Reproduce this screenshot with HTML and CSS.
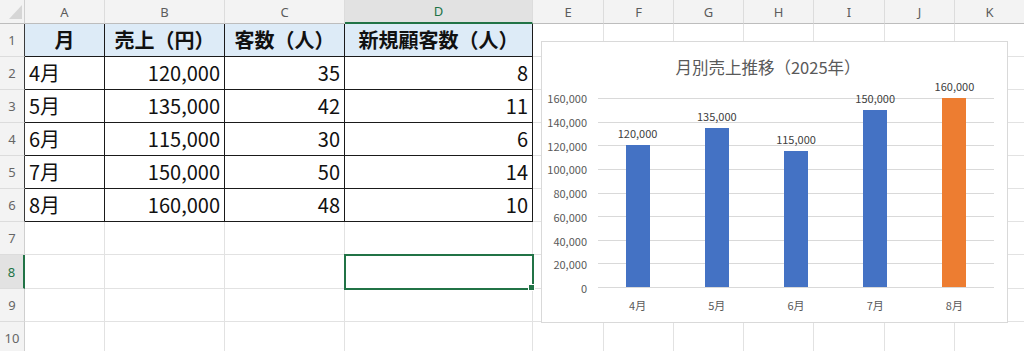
FILE: index.html
```html
<!DOCTYPE html>
<html lang="ja">
<head>
    <meta charset="UTF-8">
    <meta name="viewport" content="width=device-width, initial-scale=1.0">
    <title>月別売上</title>
    <link rel="stylesheet" href="styles.css">
</head>
<body>
    <div class="sheet">
        <table class="grid">
            <colgroup>
                <col class="w-head">
                <col class="w-a">
                <col class="w-b">
                <col class="w-c">
                <col class="w-d">
                <col class="w-e"><col class="w-f"><col class="w-g"><col class="w-h">
                <col class="w-i"><col class="w-j"><col class="w-k">
            </colgroup>
            <thead>
                <tr class="col-heads">
                    <th class="corner">
                        <svg width="25" height="23" viewBox="0 0 25 23"><polygon points="22,5 22,19 9,19" fill="#d6d6d6"/></svg>
                    </th>
                    <th>A</th><th>B</th><th>C</th><th class="sel">D</th>
                    <th>E</th><th>F</th><th>G</th><th>H</th><th>I</th><th>J</th><th>K</th>
                </tr>
            </thead>
            <tbody>
                <tr>
                    <th class="row-head edge">1</th>
                    <td class="box head">月</td>
                    <td class="box head">売上（円）</td>
                    <td class="box head">客数（人）</td>
                    <td class="box head">新規顧客数（人）</td>
                    <td></td><td></td><td></td><td></td><td></td><td></td><td></td>
                </tr>
                <tr>
                    <th class="row-head edge">2</th>
                    <td class="box">4月</td>
                    <td class="box num">120,000</td>
                    <td class="box num">35</td>
                    <td class="box num">8</td>
                    <td></td><td></td><td></td><td></td><td></td><td></td><td></td>
                </tr>
                <tr>
                    <th class="row-head edge">3</th>
                    <td class="box">5月</td>
                    <td class="box num">135,000</td>
                    <td class="box num">42</td>
                    <td class="box num">11</td>
                    <td></td><td></td><td></td><td></td><td></td><td></td><td></td>
                </tr>
                <tr>
                    <th class="row-head edge">4</th>
                    <td class="box">6月</td>
                    <td class="box num">115,000</td>
                    <td class="box num">30</td>
                    <td class="box num">6</td>
                    <td></td><td></td><td></td><td></td><td></td><td></td><td></td>
                </tr>
                <tr>
                    <th class="row-head edge">5</th>
                    <td class="box">7月</td>
                    <td class="box num">150,000</td>
                    <td class="box num">50</td>
                    <td class="box num">14</td>
                    <td></td><td></td><td></td><td></td><td></td><td></td><td></td>
                </tr>
                <tr>
                    <th class="row-head edge">6</th>
                    <td class="box">8月</td>
                    <td class="box num">160,000</td>
                    <td class="box num">48</td>
                    <td class="box num">10</td>
                    <td></td><td></td><td></td><td></td><td></td><td></td><td></td>
                </tr>
                <tr>
                    <th class="row-head">7</th>
                    <td></td><td></td><td></td><td></td>
                    <td></td><td></td><td></td><td></td><td></td><td></td><td></td>
                </tr>
                <tr class="tall">
                    <th class="row-head sel">8</th>
                    <td></td><td></td><td></td><td class="active"></td>
                    <td></td><td></td><td></td><td></td><td></td><td></td><td></td>
                </tr>
                <tr>
                    <th class="row-head">9</th>
                    <td></td><td></td><td></td><td></td>
                    <td></td><td></td><td></td><td></td><td></td><td></td><td></td>
                </tr>
                <tr>
                    <th class="row-head">10</th>
                    <td></td><td></td><td></td><td></td>
                    <td></td><td></td><td></td><td></td><td></td><td></td><td></td>
                </tr>
            </tbody>
        </table>

        <!-- グラフ（シート上に浮いているオブジェクト） -->
        <div class="chart">
            <div class="chart-title">月別売上推移（2025年）</div>
            <div class="chart-body">
                <div class="y-axis">
                    <span>160,000</span><span>140,000</span><span>120,000</span>
                    <span>100,000</span><span>80,000</span><span>60,000</span>
                    <span>40,000</span><span>20,000</span><span>0</span>
                </div>
                <div class="plot">
                    <div class="gridlines">
                        <i></i><i></i><i></i><i></i><i></i><i></i><i></i><i></i><i></i>
                    </div>
                    <div class="bars">
                        <div class="bar-col"><span class="value">120,000</span><div class="bar" style="height:142px"></div></div>
                        <div class="bar-col"><span class="value">135,000</span><div class="bar" style="height:159px"></div></div>
                        <div class="bar-col"><span class="value">115,000</span><div class="bar" style="height:136px"></div></div>
                        <div class="bar-col"><span class="value">150,000</span><div class="bar" style="height:177px"></div></div>
                        <div class="bar-col"><span class="value">160,000</span><div class="bar orange" style="height:189px"></div></div>
                    </div>
                </div>
            </div>
            <div class="x-axis">
                <span>4月</span><span>5月</span><span>6月</span><span>7月</span><span>8月</span>
            </div>
        </div>
    </div>
</body>
</html>
```

FILE: styles.css
```css
body {
  margin: 0;
  padding: 0;
  overflow: hidden;
  background-color: #ffffff;
  font-family: "Noto Sans CJK JP", sans-serif;
  color: #111111;
}

.sheet {
  position: relative;
  width: 1024px;
  height: 351px;
  overflow: hidden;
}

.grid {
  border-collapse: separate;
  border-spacing: 0;
  table-layout: fixed;
  width: 1025px;
}

.w-head { width: 25px; }
.w-a { width: 80px; }
.w-b { width: 120px; }
.w-c { width: 120px; }
.w-d { width: 188px; }
.w-e { width: 71px; }
.w-f, .w-g, .w-h, .w-j, .w-k { width: 70px; }
.w-i { width: 71px; }

/* 列見出し */
.col-heads {
  height: 23px;
}

.col-heads th {
  padding: 0;
  font-family: "Noto Sans", sans-serif;
  font-size: 13px;
  font-weight: normal;
  line-height: 22px;
  color: #5c5c5c;
  background-color: #f3f3f3;
  border-right: 1px solid #dcdcdc;
  border-bottom: 1px solid #bdbdbd;
}

.col-heads th.corner {
  border-right: 1px solid #cfcfcf;
  line-height: 0;
}

.col-heads th.sel {
  background-color: #e2e2e2;
  color: #217346;
  border-bottom: 2px solid #217346;
}

/* 行 */
tbody tr {
  height: 33px;
}

tbody tr.tall {
  height: 34px;
}

.row-head {
  padding: 0;
  font-family: "Noto Sans", sans-serif;
  font-size: 13px;
  font-weight: normal;
  color: #666666;
  background-color: #f3f3f3;
  border-right: 1px solid #cfcfcf;
  border-bottom: 1px solid #dcdcdc;
  text-align: center;
  vertical-align: middle;
}

.row-head.edge {
  border-right-color: #3a3a3a;
}

.row-head.sel {
  background-color: #e2e2e2;
  color: #217346;
  border-right: 2px solid #217346;
}

.grid td {
  padding: 0 4px;
  font-size: 20px;
  line-height: 1.2;
  vertical-align: middle;
  white-space: nowrap;
  border-right: 1px solid #e2e2e2;
  border-bottom: 1px solid #e2e2e2;
}

.grid td.box {
  border-right-color: #1a1a1a;
  border-bottom-color: #1a1a1a;
}

.grid td.head {
  background-color: #ddebf7;
  font-weight: bold;
  text-align: center;
  padding: 0;
}

.grid td.num {
  text-align: right;
}

.grid td.active {
  position: relative;
  outline: 2px solid #217346;
  outline-offset: -1px;
}

.grid td.active::after {
  content: "";
  position: absolute;
  right: -3px;
  bottom: -3px;
  width: 5px;
  height: 5px;
  background-color: #217346;
  border: 1px solid #ffffff;
}

/* グラフ */
.chart {
  position: absolute;
  left: 541px;
  top: 41px;
  width: 467px;
  height: 282px;
  box-sizing: border-box;
  padding: 14px 13px 0 0;
  border: 1px solid #d9d9d9;
  background-color: #ffffff;
  display: flex;
  flex-direction: column;
}

.chart-title {
  height: 22px;
  line-height: 22px;
  font-size: 16.5px;
  color: #595959;
  text-align: center;
}

.chart-body {
  display: flex;
  align-items: flex-start;
  height: 190px;
  margin-top: 20px;
}

.y-axis {
  width: 45px;
  margin-right: 11px;
  height: 204px;
  margin-top: -7px;
  display: flex;
  flex-direction: column;
  justify-content: space-between;
  align-items: flex-end;
  font-size: 11px;
  line-height: 14px;
  color: #595959;
}

.plot {
  width: 396px;
  height: 190px;
  display: grid;
  grid-template-rows: 190px;
}

.gridlines,
.bars {
  grid-area: 1 / 1;
  min-height: 0;
}

.gridlines {
  display: flex;
  flex-direction: column;
  justify-content: space-between;
}

.gridlines i {
  display: block;
  height: 1px;
  background-color: #d9d9d9;
}

.bars {
  display: flex;
  height: 190px;
  box-sizing: border-box;
  padding-bottom: 1px;
}

.bar-col {
  flex: 1;
  display: flex;
  flex-direction: column;
  align-items: center;
  justify-content: flex-end;
}

.value {
  flex-shrink: 0;
  font-size: 11px;
  line-height: 14px;
  color: #404040;
  margin-bottom: 5px;
}

.bar {
  flex-shrink: 0;
  width: 24px;
  background-color: #4472c4;
}

.bar.orange {
  background-color: #ed7d31;
}

.x-axis {
  display: flex;
  margin-top: 10px;
  padding-left: 56px;
  font-size: 11px;
  line-height: 14px;
  color: #595959;
}

.x-axis span {
  flex: 1;
  text-align: center;
}
```
